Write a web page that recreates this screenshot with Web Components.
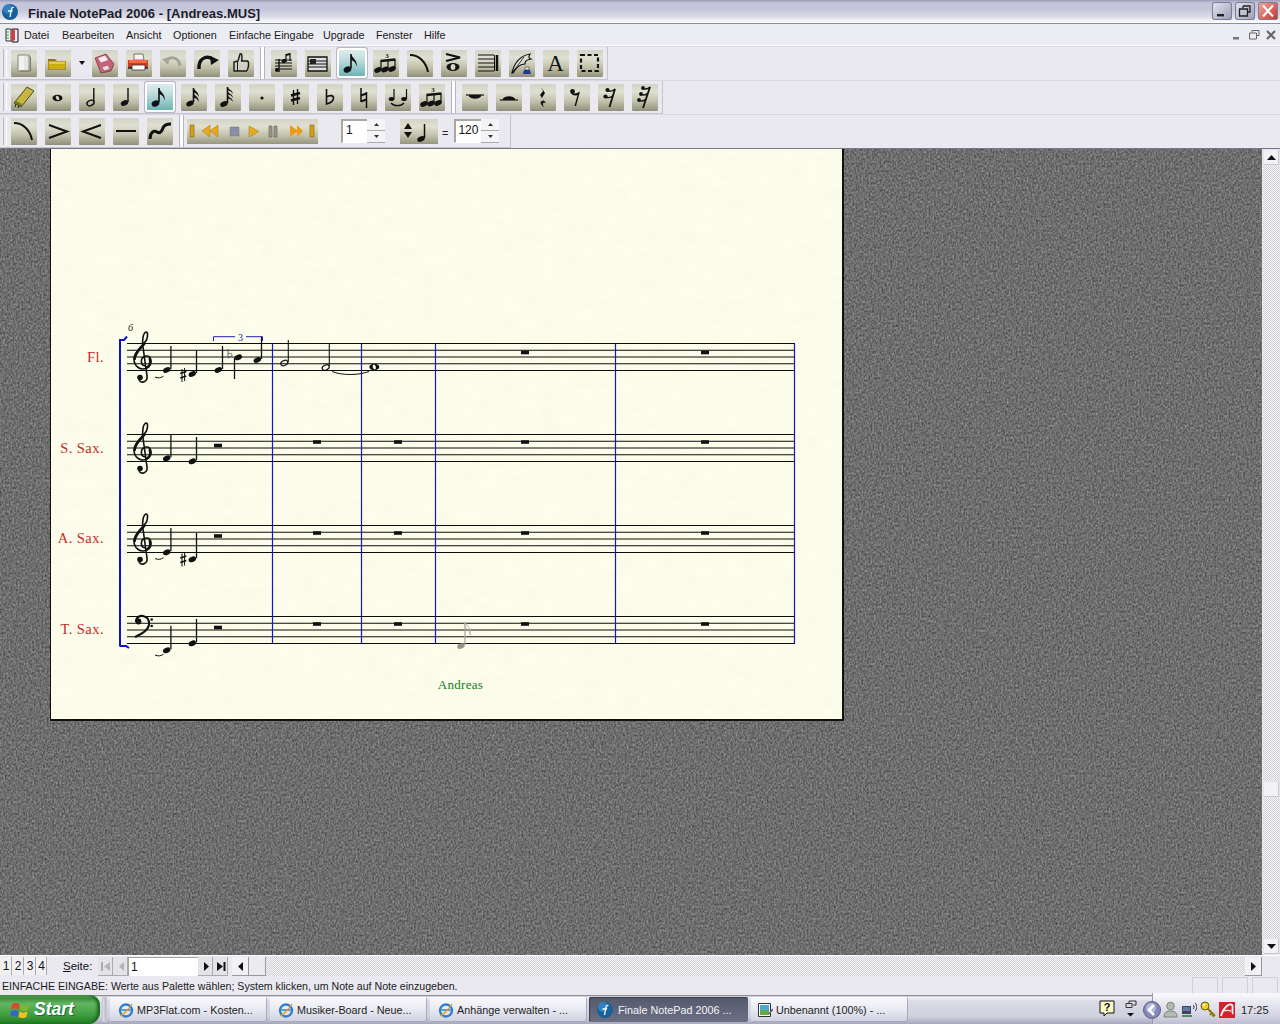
<!DOCTYPE html>
<html lang="de">
<head>
<meta charset="utf-8">
<title>Finale NotePad 2006</title>
<style>
html,body{margin:0;padding:0;width:1280px;height:1024px;overflow:hidden;background:#e9e9ef;font-family:"Liberation Sans",sans-serif;}
</style>
</head>
<body>
<fin-app>
  <fin-titlebar slot="top">Finale NotePad 2006 - [Andreas.MUS]</fin-titlebar>
  <fin-menubar slot="top">
    <fin-menu style="width:38px">Datei</fin-menu><fin-menu style="width:64px">Bearbeiten</fin-menu><fin-menu style="width:47px">Ansicht</fin-menu><fin-menu style="width:56px">Optionen</fin-menu><fin-menu style="width:94px">Einfache Eingabe</fin-menu><fin-menu style="width:53px">Upgrade</fin-menu><fin-menu style="width:48px">Fenster</fin-menu><fin-menu style="width:30px">Hilfe</fin-menu>
  </fin-menubar>
  <fin-toolbar slot="top" width="608">
    <fin-tool icon="new"></fin-tool><fin-tool icon="open"></fin-tool><fin-drop></fin-drop><fin-tool icon="save"></fin-tool><fin-tool icon="print"></fin-tool><fin-tool icon="undo"></fin-tool><fin-tool icon="redo"></fin-tool><fin-tool icon="hand"></fin-tool>
    <fin-sep></fin-sep>
    <fin-tool icon="staff"></fin-tool><fin-tool icon="measure"></fin-tool><fin-tool icon="eighth" active></fin-tool><fin-tool icon="tuplet"></fin-tool><fin-tool icon="slur"></fin-tool><fin-tool icon="artic"></fin-tool><fin-tool icon="repeat"></fin-tool><fin-tool icon="quill"></fin-tool><fin-tool icon="textA"></fin-tool><fin-tool icon="select"></fin-tool>
  </fin-toolbar>
  <fin-toolbar slot="top" width="663">
    <fin-tool icon="eraser"></fin-tool><fin-tool icon="whole"></fin-tool><fin-tool icon="half"></fin-tool><fin-tool icon="quarter"></fin-tool><fin-tool icon="eighth" active></fin-tool><fin-tool icon="sixteenth"></fin-tool><fin-tool icon="thirtysecond"></fin-tool><fin-tool icon="dot"></fin-tool><fin-tool icon="sharp"></fin-tool><fin-tool icon="flat"></fin-tool><fin-tool icon="natural"></fin-tool><fin-tool icon="tie"></fin-tool><fin-tool icon="tuplet"></fin-tool>
    <fin-sep></fin-sep>
    <fin-tool icon="rwhole"></fin-tool><fin-tool icon="rhalf"></fin-tool><fin-tool icon="rquarter"></fin-tool><fin-tool icon="reighth"></fin-tool><fin-tool icon="rsixteenth"></fin-tool><fin-tool icon="rthirty"></fin-tool>
  </fin-toolbar>
  <fin-toolbar slot="top" width="511" last>
    <fin-tool icon="slur"></fin-tool><fin-tool icon="decresc"></fin-tool><fin-tool icon="cresc"></fin-tool><fin-tool icon="dash"></fin-tool><fin-tool icon="gliss"></fin-tool>
    <fin-sep></fin-sep>
    <fin-transport></fin-transport>
    <fin-spin value="1"></fin-spin>
    <fin-tempo></fin-tempo>
    <fin-eq>=</fin-eq>
    <fin-spin value="120" short></fin-spin>
  </fin-toolbar>
  <fin-workspace>
    <fin-desk><fin-page><fin-score></fin-score></fin-page></fin-desk>
    <fin-vscroll></fin-vscroll>
  </fin-workspace>
  <fin-pagebar slot="bottom"></fin-pagebar>
  <fin-status slot="bottom">EINFACHE EINGABE: Werte aus Palette wählen; System klicken, um Note auf Note einzugeben.</fin-status>
  <fin-taskbar slot="bottom">
    <fin-task icon="ie">MP3Flat.com - Kosten...</fin-task>
    <fin-task icon="ie">Musiker-Board - Neue...</fin-task>
    <fin-task icon="ie">Anhänge verwalten - ...</fin-task>
    <fin-task icon="finale" active>Finale NotePad 2006 ...</fin-task>
    <fin-task icon="pic">Unbenannt (100%) - ...</fin-task>
  </fin-taskbar>
</fin-app>

<script>
const head=(x,y,c='#111',rx=3.9,ry=2.6)=>`<ellipse cx="${x}" cy="${y}" rx="${rx}" ry="${ry}" fill="${c}" transform="rotate(-25 ${x} ${y})"/>`;
const stem=(x,y1,y2,w=1.3,c='#111')=>`<path d="M${x} ${y1}V${y2}" stroke="${c}" stroke-width="${w}"/>`;
const K='#111';
const ICONS={
new:`<path d="M7 5h11v16H7z" fill="#e6e6e0" stroke="#8b8b80"/><path d="M18 6l1.500 1v14H9" fill="none" stroke="#77776c"/><path d="M8 6h5v14H8z" fill="#f2f2ee"/>`,
open:`<path d="M3 9h7l2 2h9v9H3z" fill="#8a7a08"/><path d="M3.500 11h17v8.500h-17z" fill="#c9ac1e"/><path d="M4 12h16v2H4z" fill="#e4cc48"/>`,
save:`<path d="M3 8l11-4 8 10-3 7-10 2z" fill="#c8627a" stroke="#7d3145" stroke-width=".8"/><path d="M6 8l7-2.500 3 4.500-7 2.500z" fill="#f4eef0"/><path d="M10 17l6-2 2 4-6 2z" fill="#e4e0e2" stroke="#80404f" stroke-width=".5"/>`,
print:`<path d="M8 4h9l1 6H8z" fill="#f4f4f4" stroke="#444" stroke-width=".7"/><path d="M2 10h20v8H2z" fill="#cf3a20"/><path d="M3 10h18v3H3z" fill="#ea7040"/><path d="M6 15h13v5H6z" fill="#fff" stroke="#333" stroke-width=".8"/><path d="M2 18h4M19 18h3" stroke="#222" stroke-width="1.500"/>`,
undo:`<path d="M6 10c5-4 13-3 14 6" fill="none" stroke="#a4a49c" stroke-width="3"/><path d="M2 9l8-2-2 8z" fill="#a4a49c"/>`,
redo:`<path d="M20 10c-6-5-14-3-15 6v3" fill="none" stroke="#111" stroke-width="3.400"/><path d="M25 10l-9-4 1 9z" fill="#111"/>`,
hand:`<path d="M6 21V12l4-1 2-7c2-1 2 2 2 5l-.5 2h6c2 1 1 8-1 10z" fill="#d0d0c4" stroke="#1a1a1a" stroke-width="1.400" stroke-linejoin="round"/><path d="M9.500 12v9" stroke="#1a1a1a"/>`,
staff:`<path d="M4 10h17M4 13h17M4 16h17M4 19h17" stroke="${K}" stroke-width="1"/><path d="M8 9v13" stroke="#111" stroke-width="1.400"/><path d="M15 4v8M19 3v8" stroke="#111" stroke-width="1.200"/>${head(13,11,'#111',2.600,2)}<path d="M15 4l4-1v2l-4 1z" fill="#111"/><circle cx="6" cy="20" r="2" fill="#111"/>`,
measure:`<path d="M3 7h19v14H3z" fill="#ddd" stroke="#111" stroke-width="1.300"/><path d="M3 11h19M3 14h19M3 17h19" stroke="#111"/><path d="M5 9h6v5H5z" fill="#222"/>`,
eighth:`${head(8.500,19.500,'#111',4,3)}${stem(12,18,4,1.600)}<path d="M12 4c1 4 7 6 5.500 13c-.5-5-3-6-5.500-7z" fill="#111"/>`,
tuplet:`${head(5,20)}${head(12,19.500)}${head(19,19)}<path d="M8 19.500V11M15 19V10.500M22 18.500V10" stroke="#111" stroke-width="1.200"/><path d="M7.500 11L22.500 9.500" stroke="#111" stroke-width="2.500"/><text x="14" y="8" font-size="7" font-weight="700" font-family="Liberation Serif" text-anchor="middle" fill="#111">3</text>`,
slur:`<path d="M3 5c9 0 16 7 18 17" fill="none" stroke="#111" stroke-width="2"/>`,
artic:`<path d="M5 4l14 3.500L5 11" fill="none" stroke="#111" stroke-width="2.200"/><ellipse cx="12" cy="17" rx="6.500" ry="4" fill="#111"/><ellipse cx="12" cy="17" rx="2.400" ry="3" fill="#d5d5c4"/>`,
repeat:`<path d="M3 5h16M3 9h16M3 13h16M3 17h16M3 21h16" stroke="#111" stroke-width="1.200"/><path d="M19.500 5v16" stroke="#111" stroke-width="1"/><path d="M22 5v16" stroke="#111" stroke-width="2.500"/>`,
quill:`<path d="M3 23c2-9 7-17 18-19c-2 4-1 4 1 5c-6 1-6 3-6 5c-4 0-8 2-12 9z" fill="#dcdcd0" stroke="#111" stroke-width="1.200"/><path d="M3 23L15 7" stroke="#111" stroke-width=".8"/><path d="M15 20h6l1 4h-8z" fill="#1e3c90"/><path d="M16 17h4v3h-4z" fill="#ddd" stroke="#222" stroke-width=".5"/>`,
textA:`<text x="12.500" y="21" font-size="23" font-family="Liberation Serif" text-anchor="middle" fill="#111">A</text>`,
select:`<path d="M4 5h17v16H4z" fill="none" stroke="#111" stroke-width="2.200" stroke-dasharray="4 2.500"/>`,
eraser:`<path d="M3 19L16 3l7 4L10 23z" fill="#c8b440" stroke="#2b2b10" stroke-width=".8"/><path d="M3 19l7 4 1-3-6-3z" fill="#7f7420"/><path d="M4 23l1-3M7 24l1-3" stroke="#222"/>`,
whole:`<ellipse cx="12.500" cy="14" rx="5" ry="3.200" fill="#111"/><ellipse cx="12.500" cy="14" rx="1.600" ry="2.300" fill="#cfcfbe" transform="rotate(-30 12.500 14)"/>`,
half:`<ellipse cx="11.500" cy="19" rx="3.700" ry="2.500" fill="none" stroke="#111" stroke-width="1.400" transform="rotate(-25 11.500 19)"/>${stem(14.800,18,4,1.400)}`,
quarter:`${head(11.500,19)}${stem(15,18,4,1.400)}`,
sixteenth:`${head(9,19.500)}${stem(12.500,18,4,1.600)}<path d="M12.500 4c1 3 6 4 5 9c-1-3-3-4-5-4.500zM12.500 9c1 3 6 4 5 9c-1-3-3-4-5-4.500z" fill="#111"/>`,
thirtysecond:`${head(9,20)}${stem(12.500,19,3,1.600)}<path d="M12.500 3c1 3 6 3 5 7c-1-3-3-3-5-3.500zM12.500 7c1 3 6 3 5 7c-1-3-3-3-5-3.500zM12.500 11c1 3 6 3 5 7c-1-3-3-3-5-3.500z" fill="#111"/>`,
dot:`<circle cx="13" cy="14" r="1.600" fill="#111"/>`,
sharp:`<path d="M10.500 6v15M14.500 5v15" stroke="#111" stroke-width="1.400"/><path d="M8 11.500l9-2.500M8 16.500l9-2.500" stroke="#111" stroke-width="2.600"/>`,
flat:`<path d="M9.500 5v15c4-1 7-3 7-6s-4-3-7-1" fill="none" stroke="#111" stroke-width="1.600"/>`,
natural:`<path d="M10 4v14M15.500 8v16" fill="none" stroke="#111" stroke-width="1.500"/><path d="M10 11.500l5.500-2M10 17.500l5.500-2" stroke="#111" stroke-width="2"/>`,
tie:`<ellipse cx="6.500" cy="15" rx="2.800" ry="2" fill="#111"/><ellipse cx="19" cy="15" rx="2.800" ry="2" fill="#111"/><path d="M9 15V5M21.500 15V5" stroke="#111" stroke-width="1.200"/><path d="M6 19c3 3.500 10 3.500 13 0" fill="none" stroke="#111" stroke-width="1.200"/>`,
rwhole:`<path d="M4 11h18" stroke="#111" stroke-width="1.200"/><path d="M7 11h12v1.500c-3 3-9 3-12 0z" fill="#111"/>`,
rhalf:`<path d="M4 16h18" stroke="#111" stroke-width="1.200"/><path d="M7 16h12v-1.500c-3-3-9-3-12 0z" fill="#111"/>`,
rquarter:`<path d="M11 3l4 6-3 5 4 5c-3-1-4 0-2 4c-5-3-4-7 0-6l-4-6 3-4z" fill="#111"/>`,
reighth:`<path d="M7 8c2 2 5 2 9-.5l-4 14.500h-1.500l3-11c-2 1-6 1-6.500-3z" fill="#111"/><circle cx="8.500" cy="7.500" r="2.400" fill="#111"/>`,
rsixteenth:`<path d="M17 5L11.500 23" stroke="#111" stroke-width="1.800"/><path d="M17 5c-2 2.500-5 2.500-8 1.500M15 11.500c-2 2.500-5 2.500-8 1.500" fill="none" stroke="#111" stroke-width="1.400"/><circle cx="9.500" cy="6" r="2.100" fill="#111"/><circle cx="7.500" cy="12.500" r="2.100" fill="#111"/>`,
rthirty:`<path d="M18 3L11 24" stroke="#111" stroke-width="1.800"/><path d="M18 3c-2 2.200-5 2.200-7 1.500M16 9c-2 2.200-5 2.200-7 1.500M14 15c-2 2.200-5 2.200-7 1.500" fill="none" stroke="#111" stroke-width="1.300"/><circle cx="11" cy="4" r="1.900" fill="#111"/><circle cx="9" cy="10" r="1.900" fill="#111"/><circle cx="7" cy="16" r="1.900" fill="#111"/>`,
decresc:`<path d="M4 7l18 6.500L4 20" fill="none" stroke="#111" stroke-width="2"/>`,
cresc:`<path d="M22 7L4 13.500 22 20" fill="none" stroke="#111" stroke-width="2"/>`,
dash:`<path d="M3 13h20" stroke="#111" stroke-width="2"/>`,
gliss:`<path d="M3 21c0-7 4-9 7-7s5-1 6-4 4-4 8-4" fill="none" stroke="#111" stroke-width="3"/>`
};

function shadow(el,html){const r=el.attachShadow({mode:'open'});r.innerHTML=html;return r;}
function def(name,render){customElements.define(name,class extends HTMLElement{connectedCallback(){if(!this.shadowRoot)shadow(this,render(this));}});}

def('fin-app',()=>`<style>:host{display:flex;flex-direction:column;width:1280px;height:1024px;overflow:hidden;background:#e9e9ef}
.mid{flex:1;display:flex;min-height:0}</style><slot name="top"></slot><div class="mid"><slot></slot></div><slot name="bottom"></slot>`);

const winBtn=(bg,icon)=>`<span class="b" style="background:${bg}"><svg width="20" height="18" viewBox="0 0 20 18">${icon}</svg></span>`;
def('fin-titlebar',()=>`<style>:host{display:flex;align-items:center;height:24px;box-sizing:border-box;border-bottom:1px solid #8d8e98;padding-left:2px;background:linear-gradient(#9c9db6 0,#c4c5d8 3px,#c6c8da 10px,#dcdde8 17px,#f4f4f8 21px,#fff 23px);font:bold 13px "Liberation Sans",sans-serif;color:#1c1c2a;letter-spacing:.03px}
.logo{width:16px;height:16px;margin-right:10px;flex:none}
.t{flex:1;margin-top:3px;white-space:nowrap}
.btns{display:flex;gap:3px;margin-right:2px;margin-top:-2px}
.b{display:block;width:20px;height:18px;border-radius:3px;box-shadow:inset 0 0 0 1px #7c7e96}</style>
<svg class="logo" viewBox="0 0 16 16"><circle cx="8" cy="8" r="8" fill="#18609c"/><circle cx="6" cy="5" r="5" fill="#3d8fd0" opacity=".7"/><path d="M8 13l1.500-8c.3-1.500 1.500-2 2.500-1.500M6 7h4.500" fill="none" stroke="#fff" stroke-width="1.300"/></svg>
<span class="t"><slot></slot></span>
<span class="btns">${winBtn('linear-gradient(135deg,#e6e7ef,#9a9cb8)','<path d="M5 12h7v2.400H5z" fill="#222"/>')}${winBtn('linear-gradient(135deg,#e6e7ef,#9a9cb8)','<path d="M8 4h7v6h-2M8 4v2" fill="none" stroke="#222" stroke-width="1.300"/><path d="M4.500 7h8v7h-8z" fill="none" stroke="#222" stroke-width="1.300"/>')}${winBtn('linear-gradient(135deg,#f0b0a4,#c82c24)','<path d="M5 3.500l10 11M15 3.500l-10 11" stroke="#fff" stroke-width="2"/>')}</span>`);

def('fin-menubar',()=>`<style>:host{display:flex;align-items:center;height:22px;box-sizing:border-box;background:#ecedf2;border-bottom:1px solid #fff;font:10.800px "Liberation Sans",sans-serif;color:#1a1a1a}
.doc{width:16px;height:16px;margin:0 3px 0 4px;flex:none}
.m{display:flex;margin-left:1px;flex:1}
.c{display:flex;gap:5px;align-items:center;margin-right:3px}</style>
<svg class="doc" viewBox="0 0 16 16"><path d="M2 2h5v12H2z" fill="#f4f4f0" stroke="#234" /><path d="M8 2h6v13H8z" fill="none" stroke="#111"/><path d="M7 3l4-1v11l-4 2z" fill="#c44"/><path d="M2 5h3M2 8h3M2 11h3" stroke="#393"/></svg>
<span class="m"><slot></slot></span>
<span class="c"><svg width="12" height="12" viewBox="0 0 12 12"><path d="M2 8h6v2.500H2z" fill="#777"/></svg><svg width="12" height="12" viewBox="0 0 12 12"><path d="M4 1.500h7v5H9M4 1.500v2" fill="none" stroke="#666"/><path d="M1.500 4h7v6h-7z" fill="none" stroke="#666"/></svg><svg width="12" height="12" viewBox="0 0 12 12"><path d="M2 2l8 8M10 2l-8 8" stroke="#666" stroke-width="2.200"/></svg></span>`);
def('fin-menu',()=>`<style>:host{display:block;white-space:nowrap;flex:none}</style><slot></slot>`);

def('fin-toolbar',el=>{const w=el.getAttribute('width');return `<style>:host{display:block;height:34px;box-sizing:border-box;background:#e9e9ef;border-top:1px solid #d8d8e0;${el.hasAttribute('last')?'height:35px;border-bottom:1px solid #77778a;':''}}
.bar{display:flex;align-items:center;height:100%;width:${w}px;box-sizing:border-box;padding-left:11px;gap:8px;border-right:1px solid #c4c4cc;border-bottom:1px solid #c4c4cc;position:relative}
.grip{position:absolute;left:3px;top:2px;bottom:2px;width:2px;border-left:1px solid #bbb;border-right:1px solid #fff}</style><div class="bar"><span class="grip"></span><slot></slot></div>`});
const BTN='linear-gradient(#d4d4c6,#e0e0d2 30%,#c0c0aa 68%,#96967e)';
def('fin-tool',el=>{const a=el.hasAttribute('active');const i=ICONS[el.getAttribute('icon')]||'';return `<style>:host{display:block;flex:none;width:26px;height:26px;box-sizing:border-box;border-radius:1px;${a?'background:linear-gradient(#dcecec,#c3dedf 35%,#6eb4b6);box-shadow:0 0 0 2px #fff,0 0 0 3px #b8b8c4;':`background:${BTN};box-shadow:0 1px 0 #8f8f84;`}}svg{display:block;width:26px;height:26px}</style><svg viewBox="0 0 26 26">${i}</svg>`});
def('fin-drop',()=>`<style>:host{display:block;width:6px;margin:0 -1px 0 0;flex:none}svg{display:block}</style><svg width="6" height="4" viewBox="0 0 6 4"><path d="M0 0h6L3 4z" fill="#111"/></svg>`);
def('fin-sep',()=>`<style>:host{display:block;flex:none;width:3px;height:32px;border-left:1px solid #b4b4bc;border-right:1px solid #b4b4bc;background:#fff;margin:0 -2px}</style>`);
def('fin-transport',()=>`<style>:host{display:block;flex:none;margin-left:-3px;width:131px;height:25px;background:${BTN}}svg{display:block}</style>
<svg width="131" height="25" viewBox="0 0 131 25">
<path d="M3 6h4v12H3z" fill="#d8a018" stroke="#8a6a10" stroke-width=".7"/>
<path d="M31 6v12l-8-6zM23 6v12l-8-6z" fill="#e8a820" stroke="#a07a10" stroke-width=".5"/>
<path d="M43 8h9v9h-9z" fill="#8a8ea6" stroke="#777" stroke-width=".5"/>
<path d="M62 7l10 5.500-10 5.500z" fill="#e6ac20" stroke="#a07a10" stroke-width=".5"/>
<path d="M82 7h3v11h-3zM87 7h3v11h-3z" fill="#9a9a8a" stroke="#666" stroke-width=".7"/>
<path d="M103 6l8 6-8 6zM110 6l6 6-6 6z" fill="#ec9a18"/>
<path d="M123 6h4v12h-4z" fill="#d8a018" stroke="#8a6a10" stroke-width=".7"/></svg>`);
def('fin-spin',el=>{const v=el.getAttribute('value');const s=el.hasAttribute('short');return `<style>:host{display:flex;flex:none;height:24px;${s?'':'margin:0 7px 0 15px;'}font:12px "Liberation Sans",sans-serif;color:#111}
.i{width:${s?27:26}px;height:24px;box-sizing:border-box;background:#fff;border:2px solid #a8a8a0;border-right:0;border-bottom:1px solid #fff;padding-left:${s?2:3}px;line-height:19px}
.a{width:18px;display:flex;flex-direction:column;background:#f4f4f6}
.a span{flex:1;display:flex;align-items:center;justify-content:center;border-bottom:1px solid #aaa}
.a svg{display:block}</style><span class="i">${v}</span><span class="a"><span><svg width="5" height="3"><path d="M0 3h5L2.500 0z" fill="#333"/></svg></span><span><svg width="5" height="3"><path d="M0 0h5L2.500 3z" fill="#333"/></svg></span></span>`});
def('fin-tempo',()=>`<style>:host{display:block;flex:none;width:38px;height:25px;background:${BTN}}svg{display:block}</style><svg width="38" height="25" viewBox="0 0 38 25"><path d="M4 10l4-6 4 6zM4 13h8l-4 6z" fill="#111"/>${head(21,20)}${stem(24.500,19,5,1.500)}</svg>`);
def('fin-eq',()=>`<style>:host{display:block;flex:none;font:11px "Liberation Sans",sans-serif;margin:3px -2px 0 -4px;color:#222}</style><slot></slot>`);

def('fin-workspace',()=>`<style>:host{display:flex;flex:1;min-height:0;width:100%}</style><slot></slot>`);
def('fin-desk',()=>`<style>:host{display:block;flex:1;position:relative;overflow:hidden;background:#6e6e6e}
.tex{position:absolute;inset:0;width:100%;height:100%}
.c{position:relative;padding-left:50px}</style>
<svg class="tex"><filter id="n" x="0" y="0" width="100%" height="100%" color-interpolation-filters="sRGB"><feTurbulence type="fractalNoise" baseFrequency=".55 .42" numOctaves="2" seed="4"/><feColorMatrix values=".42 0 0 0 .22  .42 0 0 0 .22  .42 0 0 0 .22  0 0 0 0 1"/></filter><rect width="100%" height="100%" filter="url(#n)"/></svg>
<div class="c"><slot></slot></div>`);
def('fin-page',()=>`<style>:host{display:block;position:relative;width:794px;height:572px;box-sizing:border-box;background:#fdfdec;border:solid #111;border-width:0 2px 2px 1px}</style><slot></slot>`);
def('fin-score',()=>{
 const staves=[343.5,434.5,525.5,616.5];
 const bars=[272.5,361.5,435.5,615.5,794.5];
 let s='';
 for(const t of staves)for(let i=0;i<5;i++){const y=(t+i*6.75).toFixed(2);s+=`<path d="M127 ${y}H795" stroke="#0c0c0c" stroke-width="1"/>`;}
 for(const x of bars)s+=`<path d="M${x} 344V643.500" stroke="#1616c4" stroke-width="1.200"/>`;
 s+=`<path d="M120 646.500V340H124L127 336.500M120 646H126L129 648" fill="none" stroke="#1010d0" stroke-width="2"/>`;
 const treble=t=>{const d=t-343.5;return `<g transform="translate(0 ${d})"><path d="M145 366C140 365 140 357 146 356C152 355 153 365 147 368C140 371 134 366 134 359C134 351 143 346 146.500 340C148 336 148 332 146 332C143 333 142 340 143 347L147 376C148 382 141 384 139 380" fill="none" stroke="#111" stroke-width="1.600"/><path d="M134.500 360C134.500 353 141 348 145 343M149.500 358C151 362 150 366 146 368" fill="none" stroke="#111" stroke-width="2.400"/><circle cx="140" cy="377.500" r="2.800" fill="#111"/></g>`};
 s+=treble(343.5)+treble(434.5)+treble(525.5);
 s+=`<path d="M136 622C136 617 140 615.500 143 616C148 617 149.500 621 149 625C148 630 142 634 135 637" fill="none" stroke="#111" stroke-width="2.200"/><circle cx="138.500" cy="621.500" r="2.900" fill="#111"/><circle cx="151.700" cy="619.500" r="1.300" fill="#111"/><circle cx="151.700" cy="626" r="1.300" fill="#111"/>`;
 const note=(x,y,top)=>head(x,y)+stem(x+4.2,y-1,top);
 const ledger=y=>`<path d="M155 ${y}c3 1.500 6 1 8.500-.8" fill="none" stroke="#111" stroke-width="1"/>`;
 const sharp=(x,y)=>`<path d="M${x-1.300} ${y-6}v13M${x+1.300} ${y-7}v13" stroke="#111" stroke-width="1"/><path d="M${x-3} ${y-1.500}l6-2M${x-3} ${y+3}l6-2" stroke="#111" stroke-width="1.700"/>`;
 const rest=(x,y)=>`<rect x="${x-4}" y="${y-1.800}" width="8" height="3.600" fill="#111"/>`;
 s+=ledger(377)+note(166.7,370,346)+sharp(183.3,375)+note(192.3,374,350.5)+note(218.3,370,346);
 s+=head(238.3,357.3)+stem(234.5,358,379)+`<path d="M228 349v9c2-.5 4-1.500 4-3.200s-2-2-4-.8" fill="none" stroke="#556" stroke-width=".9"/>`+note(257.3,360,336.7);
 s+=`<ellipse cx="284.300" cy="363" rx="3.700" ry="2.400" fill="none" stroke="#111" stroke-width="1.200" transform="rotate(-25 284.300 363)"/>`+stem(288.3,362,340,1.1);
 s+=`<ellipse cx="325.700" cy="367.500" rx="3.700" ry="2.400" fill="none" stroke="#111" stroke-width="1.200" transform="rotate(-25 325.700 367.500)"/>`+stem(329.3,366,343.3,1.1);
 s+=`<path d="M332 371.500C342 375.500 358 375.500 369 371.500" fill="none" stroke="#111" stroke-width="1"/>`;
 s+=`<ellipse cx="374.300" cy="367" rx="5" ry="3.200" fill="#111"/><ellipse cx="374.300" cy="367" rx="1.500" ry="2.500" fill="#fdfdec" transform="rotate(-20 374.300 367)"/>`;
 s+=`<path d="M213.500 341V336.700H235M246 336.700H262.500V341" fill="none" stroke="#2020b0" stroke-width="1"/><text x="240.500" y="340.500" font-family="Liberation Serif" font-size="10" fill="#2020b0" text-anchor="middle">3</text>`;
 s+=`<text x="130.500" y="331" font-family="Liberation Serif" font-style="italic" font-size="10.500" fill="#222" text-anchor="middle">6</text>`;
 s+=note(166.7,458.3,434)+note(192.3,461.3,437);
 s+=ledger(558.5)+note(166.7,552.3,528)+sharp(183.3,559.5)+note(192.3,559.3,533);
 s+=ledger(655)+note(166.7,650.3,625.7)+note(192.3,643.3,619);
 [[525,352.5],[705,352.5],[218,445.5],[317,442],[398,442],[525,442],[705,442],[218,536],[317,533],[398,533],[525,533],[705,533],[218,627.5],[317,624],[398,624],[525,624],[705,624]].forEach(r=>s+=rest(r[0],r[1]));
 s+=`<g opacity=".95">${head(461,646,'#8f8f86')}${stem(465,645,622,1.3,'#a8a89c')}<path d="M465 622c1 4 7 6 5 13c-.5-5-3-6-5-7z" fill="none" stroke="#b4b4a8"/></g>`;
 const lab=(y,t)=>`<text x="104" y="${y}" text-anchor="end" font-family="Liberation Serif" font-size="14.500" letter-spacing=".45" fill="#c82a2a">${t}</text>`;
 s+=lab(362,'Fl.')+lab(453,'S. Sax.')+lab(543,'A. Sax.')+lab(634,'T. Sax.');
 s+=`<text x="460.500" y="689" text-anchor="middle" font-family="Liberation Serif" font-size="13" letter-spacing=".3" fill="#127a22">Andreas</text>`;
 return `<style>:host{display:block;width:791px;height:570px}svg{display:block}</style>
 <svg width="791" height="570" viewBox="51 149 791 570"><filter id="p" x="0" y="0" width="100%" height="100%" color-interpolation-filters="sRGB"><feTurbulence type="fractalNoise" baseFrequency=".05 .09" numOctaves="3" seed="9"/><feColorMatrix values="0 0 0 0 .85  0 0 0 0 .85  0 0 0 0 .7  .14 0 0 0 -.04"/></filter><rect x="51" y="149" width="791" height="570" filter="url(#p)"/>${s}</svg>`;
});

const DITHER='background:repeating-conic-gradient(#f6f6f8 0 25%,#cfcfd6 0 50%) 0 0/2px 2px;';
const sbtn='background:#f2f2f5;box-shadow:inset 0 0 0 1px #e4e4e8,inset -1px -1px 0 1px #c8c8d0;';
def('fin-vscroll',()=>`<style>:host{display:flex;flex-direction:column;flex:none;width:17px;margin-left:1px;${DITHER}}
.b{${sbtn}height:17px;display:flex;align-items:center;justify-content:center;flex:none}
.sp{flex:none;height:615px}.th{${sbtn}height:17px;flex:none}.sp2{flex:1}svg{display:block}</style>
<span class="b"><svg width="9" height="5"><path d="M0 5h9L4.500 0z" fill="#111"/></svg></span><span class="sp"></span><span class="th"></span><span class="sp2"></span><span class="b"><svg width="9" height="5"><path d="M0 0h9L4.500 5z" fill="#111"/></svg></span>`);

def('fin-pagebar',()=>`<style>:host{display:flex;align-items:center;height:21px;background:#e9e9ef;font:11.500px "Liberation Sans",sans-serif;color:#111;box-sizing:border-box;border-top:1px solid #fff}
.tab{width:12px;height:18px;text-align:center;line-height:18px;box-shadow:inset -1px 0 0 #aaa;flex:none;background:#f1f1f4;font-size:12px}.tab:first-child{background:#fff}
.se{margin-left:16px;width:35px;flex:none}u{text-decoration:underline}
.nb{width:15px;height:19px;flex:none;background:#e3e3e8;display:flex;align-items:center;justify-content:center;box-shadow:inset -1px -1px 0 #aaa}
svg{display:block}
.inp{width:70px;height:19px;background:#fff;box-sizing:border-box;border:solid #a4a4a4;border-width:1px 0 0 1px;padding-left:2px;line-height:18px;font-size:12px;flex:none}
.sb{width:17px;height:19px;flex:none;background:#f2f2f5;box-shadow:inset -1px -1px 0 #999;display:flex;align-items:center;justify-content:center}
.track{flex:1;height:19px;${DITHER}}
.end{width:18px;flex:none}</style>
<span class="tab">1</span><span class="tab">2</span><span class="tab">3</span><span class="tab" style="width:11px">4</span>
<span class="se"><u>S</u>eite:</span>
<span class="nb"><svg width="10" height="11"><path d="M1 1v9" stroke="#aaa" stroke-width="2"/><path d="M9 1v9L3 5.500z" fill="#b4b4b8"/></svg></span>
<span class="nb"><svg width="8" height="11"><path d="M7 1v9L2 5.500z" fill="#b4b4b8"/></svg></span>
<span class="inp">1</span>
<span class="nb"><svg width="8" height="11"><path d="M2 1v9l5-4.500z" fill="#111"/></svg></span>
<span class="nb" style="margin-right:4px"><svg width="10" height="11"><path d="M1 1v9l6-4.500z" fill="#111"/><path d="M8.500 1v9" stroke="#111" stroke-width="2"/></svg></span>
<span class="sb"><svg width="5" height="9"><path d="M5 0v9L0 4.500z" fill="#111"/></svg></span><span class="sb" style="background:#ececf0"></span>
<span class="track"></span>
<span class="sb"><svg width="5" height="9"><path d="M0 0v9l5-4.500z" fill="#111"/></svg></span><span class="end"></span>`);

def('fin-status',()=>`<style>:host{display:flex;align-items:center;height:19px;background:#e9e9ef;font:10.600px "Liberation Sans",sans-serif;color:#1a1a1a;white-space:nowrap;padding-left:2px;box-sizing:border-box}
.t{flex:1}.p{width:26px;height:17px;box-sizing:border-box;border:1px solid #d0d0d6;border-bottom-color:#d8d8de;margin-left:4px;flex:none}.p:last-child{margin-right:2px}</style><span class="t"><slot></slot></span><span class="p"></span><span class="p"></span><span class="p"></span>`);

const TASK={ie:`<circle cx="8" cy="8.500" r="6" fill="none" stroke="#2f7fd0" stroke-width="2.400"/><path d="M3.500 8h9" stroke="#2f7fd0" stroke-width="1.600"/><path d="M2 14c3-1 9-7 12-12" stroke="#e4a01c" stroke-width="1.300" fill="none"/>`,
finale:`<circle cx="8" cy="8" r="8" fill="#18609c"/><circle cx="6" cy="5" r="5" fill="#3d8fd0" opacity=".7"/><path d="M7.500 13l1.500-8c.3-1.500 1.500-2 2.500-1.500M5.500 7h4.500" fill="none" stroke="#fff" stroke-width="1.300"/>`,
pic:`<path d="M1.500 1.500h12v13h-12z" fill="#fff" stroke="#333"/><path d="M3 3h9v5H3z" fill="#4aa8d8"/><path d="M3 8h9v5H3z" fill="#68a848"/><path d="M12 12l4-5" stroke="#667" stroke-width="1.500"/>`};
def('fin-task',el=>{const a=el.hasAttribute('active');const pic=el.getAttribute('icon')==='pic';return `<style>:host{display:flex;align-items:center;width:${a?159:157}px;height:25px;box-sizing:border-box;padding-left:${pic?6:8}px;gap:3px;margin-right:3px;${a?'margin-left:-1px;':''}border-radius:2px;font:10.800px "Liberation Sans",sans-serif;white-space:nowrap;flex:none;${a?'background:linear-gradient(#55596c,#6b6f84);color:#f4f4f8;box-shadow:inset 1px 1px 1px #3c3f50;':'background:linear-gradient(#fafafc,#e8e9f2 50%,#cfd0e0);color:#222;box-shadow:inset -1px -1px 0 #a8a9bc;'}}svg{flex:none;width:16px;height:16px;margin-right:${a?2:0}px}</style><svg viewBox="0 0 16 16">${TASK[el.getAttribute('icon')]}</svg><slot></slot>`});

def('fin-taskbar',()=>`<style>:host{display:flex;align-items:center;height:29px;position:relative;background:linear-gradient(#6e6e7c 0,#f2f2f6 2px,#dadbe6 6px,#cfd0de 22px,#a6a7bc);font:12px "Liberation Sans",sans-serif}
.start{display:flex;align-items:center;height:29px;width:100px;flex:none;box-sizing:border-box;padding-left:10px;gap:4px;border-radius:0 10px 12px 0;background:linear-gradient(#5c9f58 0,#3e8f3e 12%,#63b660 30%,#3f9c3f 70%,#1e7a22);box-shadow:inset -3px 0 3px #1d6a20;color:#fff;font:italic bold 17.500px "Liberation Sans",sans-serif;text-shadow:1px 1px 1px #164}
.grip{width:5px;height:25px;margin:0 3px 0 2px;background:linear-gradient(90deg,#f0f0f4,#a8a8b8);flex:none;box-shadow:inset 0 0 0 1px #c8c8d4}
.tasks{display:flex;flex:1}
.tray{position:absolute;right:0;top:-2px;bottom:0;width:128px;display:flex;align-items:center;box-sizing:border-box;padding:2px 0 0 0;background:linear-gradient(#fafafd 0,#e8e9f2 30%,#d0d1e0 80%,#bcbdd0);border-left:1px solid #9a9ab0;font:11px "Liberation Sans",sans-serif;color:#222}
svg{display:block;flex:none}</style>
<span class="start"><svg width="20" height="20" viewBox="0 0 20 20"><path d="M2 4c3-1.500 5-1.500 7.500 0L8.500 9.500C6 8 4 8 1 9.500z" fill="#d8482a"/><path d="M11 4.500c2.500 1.500 5 1.500 8 0L18 10c-3 1.500-5 1.500-8 0z" fill="#7cb830"/><path d="M1 11c3-1.500 5-1.500 7.300 0L7.500 17c-2.500-1.500-5-1.500-7.500 0z" fill="#3068c8"/><path d="M9.500 11.500c2.500 1.500 5 1.500 8 0L16.500 17c-3 1.500-5 1.500-8 0z" fill="#f0c020"/></svg>Start</span>
<span class="grip"></span>
<span class="tasks"><slot></slot></span>
<span style="position:absolute;left:1099px;top:5px"><svg width="16" height="18" viewBox="0 0 16 18"><path d="M1 1h14v12H8l-3 3v-3H1z" fill="#fbf8c8" stroke="#111"/><text x="8" y="11" font-size="11" font-weight="700" font-family="Liberation Sans" text-anchor="middle" fill="#111">?</text></svg></span>
<span style="position:absolute;left:1124px;top:4px"><svg width="13" height="20" viewBox="0 0 13 20"><path d="M5 2h7v4H9M5 2v2" fill="none" stroke="#333"/><path d="M2 4.500h6v4H2z" fill="none" stroke="#333"/><path d="M3 14h7l-3.500 3.500z" fill="#111"/></svg></span>
<span class="tray">
 <svg width="18" height="18" viewBox="0 0 18 18" style="margin-left:-10px;margin-right:2px"><circle cx="9" cy="9" r="8.500" fill="#8488b8" stroke="#5a5e84"/><circle cx="8" cy="7" r="5" fill="#b4b8d8"/><path d="M11 4L6 9l5 5" fill="none" stroke="#fff" stroke-width="2.600"/></svg>
 <svg width="15" height="17" viewBox="0 0 15 17" style="margin-right:3px"><circle cx="7.500" cy="5" r="3.800" fill="#b4bcb0" stroke="#7c8478"/><path d="M1 16c0-5 3-6 6.500-6s6.500 1 6.500 6z" fill="#b4bcb0" stroke="#7c8478"/></svg>
 <svg width="16" height="16" viewBox="0 0 16 16" style="margin-right:3px"><path d="M1 4h9v8H1z" fill="#3c4468"/><path d="M2 5h7v4H2z" fill="#6876a4"/><path d="M1 13h10v2H1z" fill="#586"/><path d="M12 3c1.500 1 1.500 3 0 4M14 1c2.500 2 2.500 6 0 8" fill="none" stroke="#333"/></svg>
 <svg width="17" height="17" viewBox="0 0 17 17" style="margin-right:2px"><circle cx="5" cy="5" r="4" fill="#f0d020" stroke="#6c5c08"/><circle cx="4" cy="4" r="1.200" fill="#fff"/><path d="M7.500 7.500l7.500 7.500M12 12l-2 2M14 14l-1.500 1.500" stroke="#8a7408" stroke-width="2"/></svg>
 <svg width="16" height="16" viewBox="0 0 16 16" style="margin-right:6px"><path d="M0 0h16v16H0z" fill="#d8202c"/><path d="M2 14C5 4 11 1 13 3c2 2-1 6 1 9" fill="none" stroke="#fff" stroke-width="1.800"/><path d="M5 9c2-1 4-1 7 0" stroke="#fff" stroke-width="1.200"/></svg>
 <span>17:25</span>
</span>`);
</script>
</body>
</html>
